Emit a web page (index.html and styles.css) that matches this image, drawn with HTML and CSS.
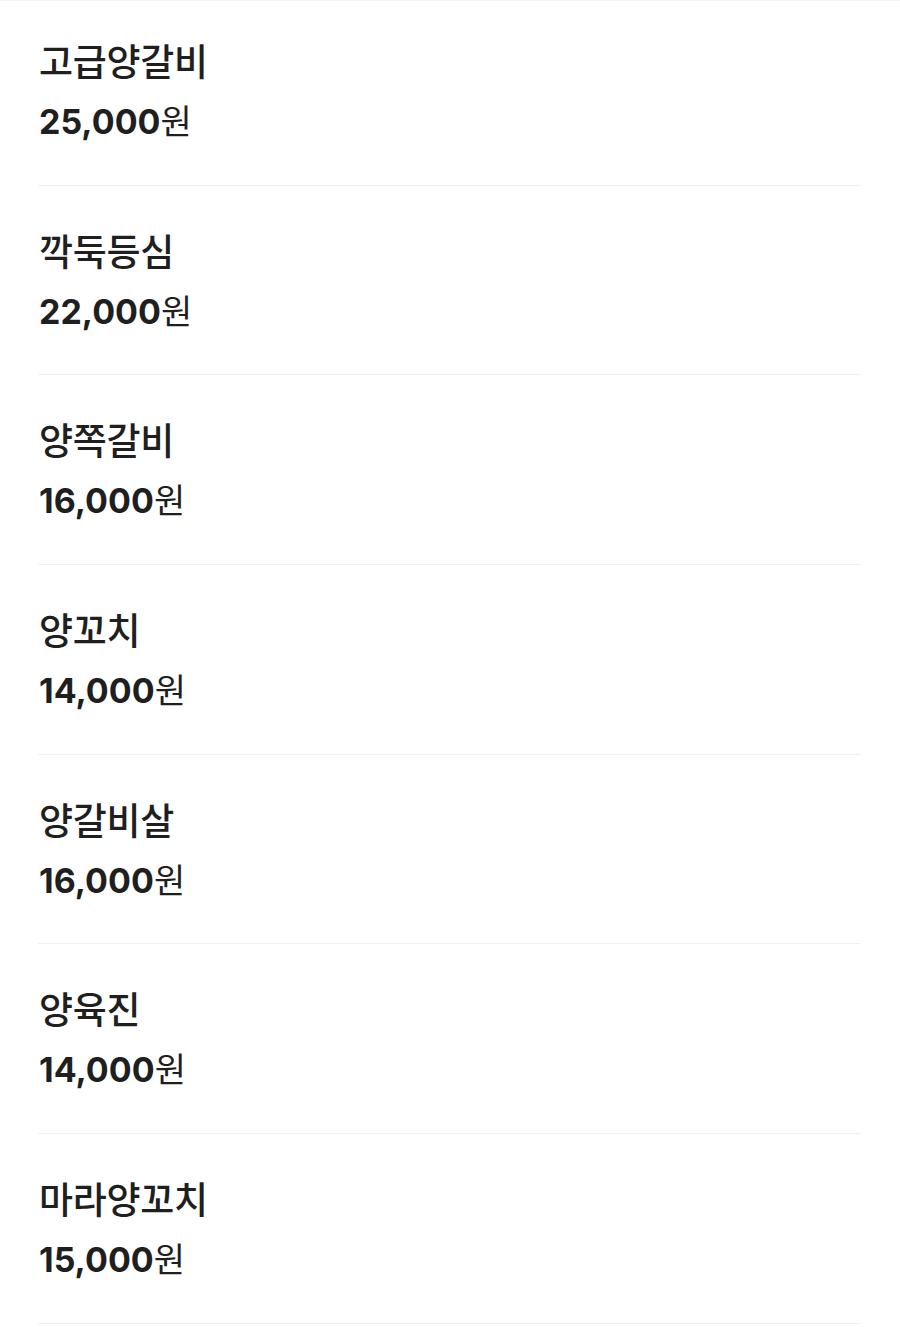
FILE: index.html
```html
<!DOCTYPE html>
<html lang="ko">

<head>
    <meta charset="UTF-8">
    <meta name="viewport" content="width=device-width, initial-scale=1.0">
    <title>메뉴</title>
    <link rel="stylesheet" href="styles.css">
</head>

<body>
    <div class="menu">
        <ul class="menu-list">
            <li class="menu-item">
                <div class="menu-name">고급양갈비</div>
                <div class="menu-price"><b>25,000</b>원</div>
            </li>
            <li class="menu-item">
                <div class="menu-name">깍둑등심</div>
                <div class="menu-price"><b>22,000</b>원</div>
            </li>
            <li class="menu-item">
                <div class="menu-name">양쪽갈비</div>
                <div class="menu-price"><b>16,000</b>원</div>
            </li>
            <li class="menu-item">
                <div class="menu-name">양꼬치</div>
                <div class="menu-price"><b>14,000</b>원</div>
            </li>
            <li class="menu-item">
                <div class="menu-name">양갈비살</div>
                <div class="menu-price"><b>16,000</b>원</div>
            </li>
            <li class="menu-item">
                <div class="menu-name">양육진</div>
                <div class="menu-price"><b>14,000</b>원</div>
            </li>
            <li class="menu-item">
                <div class="menu-name">마라양꼬치</div>
                <div class="menu-price"><b>15,000</b>원</div>
            </li>
        </ul>
    </div>
</body>

</html>
```

FILE: styles.css
```css
body {
    margin: 0;
    background-color: #ffffff;
    font-family: Inter, "Noto Sans CJK KR", sans-serif;
    color: #1f1f1f;
}

.menu {
    border-top: 1px solid #f4f4f4;
}

.menu-list {
    list-style: none;
    margin: 0;
    padding: 0 39px 0 38px;
}

.menu-item {
    padding: 42px 0 37.67px 1px;
    border-bottom: 1px solid #f1f1f1;
}

/* first row is cut off a little at the top */
.menu-item:first-child {
    padding-top: 37px;
}

.menu-name {
    font-size: 37px;
    font-weight: 500;
    line-height: 50px;
    letter-spacing: -0.3px;
}

.menu-price {
    margin-top: 9px;
    font-size: 34px;
    line-height: 50px;
    font-weight: 400;
}

.menu-price b {
    font-weight: 700;
}
```
